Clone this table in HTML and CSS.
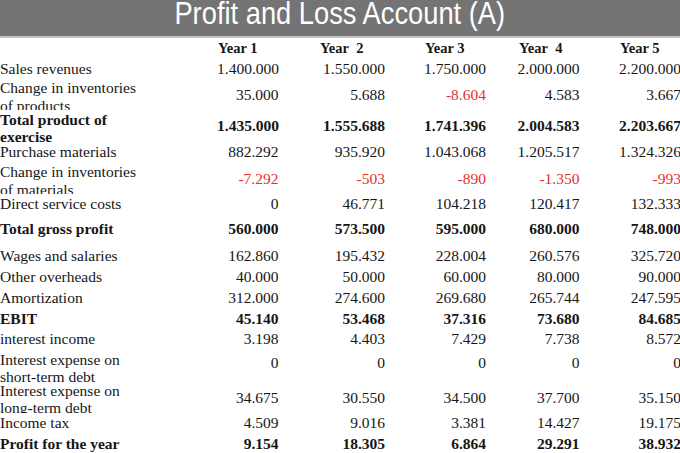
FILE: index.html
```html
<!DOCTYPE html>
<html lang="en">
<head>
<meta charset="utf-8">
<title>Profit and Loss Account (A)</title>
<link rel="stylesheet" href="styles.css">
</head>
<body>
<header class="titlebar"><h1 class="title">Profit and Loss Account (A)</h1></header>
<main class="table">
  <div class="row hdr h21">
    <div class="lbl"></div>
    <div class="c1">Year 1</div>
    <div class="c2">Year&nbsp; 2</div>
    <div class="c3">Year 3</div>
    <div class="c4">Year&nbsp; 4</div>
    <div class="c5">Year 5</div>
  </div>
  <div class="row h19">
    <div class="lbl">Sales revenues</div>
    <div class="c1">1.400.000</div><div class="c2">1.550.000</div><div class="c3">1.750.000</div><div class="c4">2.000.000</div><div class="c5">2.200.000</div>
  </div>
  <div class="row h32 pt2 lp3">
    <div class="lbl">Change in inventories of products</div>
    <div class="c1">35.000</div><div class="c2">5.688</div><div class="c3 neg">-8.604</div><div class="c4">4.583</div><div class="c5">3.667</div>
  </div>
  <div class="row h36 pb4 lp4 bold">
    <div class="lbl">Total product of exercise</div>
    <div class="c1">1.435.000</div><div class="c2">1.555.688</div><div class="c3">1.741.396</div><div class="c4">2.004.583</div><div class="c5">2.203.667</div>
  </div>
  <div class="row h14 pb2">
    <div class="lbl">Purchase materials</div>
    <div class="c1">882.292</div><div class="c2">935.920</div><div class="c3">1.043.068</div><div class="c4">1.205.517</div><div class="c5">1.324.326</div>
  </div>
  <div class="row h34 pt4 lp3">
    <div class="lbl">Change in inventories of materials</div>
    <div class="c1 neg">-7.292</div><div class="c2 neg">-503</div><div class="c3 neg">-890</div><div class="c4 neg">-1.350</div><div class="c5 neg">-993</div>
  </div>
  <div class="row h20">
    <div class="lbl">Direct service costs</div>
    <div class="c1">0</div><div class="c2">46.771</div><div class="c3">104.218</div><div class="c4">120.417</div><div class="c5">132.333</div>
  </div>
  <div class="row h30 bold">
    <div class="lbl">Total gross profit</div>
    <div class="c1">560.000</div><div class="c2">573.500</div><div class="c3">595.000</div><div class="c4">680.000</div><div class="c5">748.000</div>
  </div>
  <div class="row h24">
    <div class="lbl">Wages and salaries</div>
    <div class="c1">162.860</div><div class="c2">195.432</div><div class="c3">228.004</div><div class="c4">260.576</div><div class="c5">325.720</div>
  </div>
  <div class="row h18">
    <div class="lbl">Other overheads</div>
    <div class="c1">40.000</div><div class="c2">50.000</div><div class="c3">60.000</div><div class="c4">80.000</div><div class="c5">90.000</div>
  </div>
  <div class="row h24">
    <div class="lbl">Amortization</div>
    <div class="c1">312.000</div><div class="c2">274.600</div><div class="c3">269.680</div><div class="c4">265.744</div><div class="c5">247.595</div>
  </div>
  <div class="row h17 bold">
    <div class="lbl">EBIT</div>
    <div class="c1">45.140</div><div class="c2">53.468</div><div class="c3">37.316</div><div class="c4">73.680</div><div class="c5">84.685</div>
  </div>
  <div class="row h24">
    <div class="lbl">interest income</div>
    <div class="c1">3.198</div><div class="c2">4.403</div><div class="c3">7.429</div><div class="c4">7.738</div><div class="c5">8.572</div>
  </div>
  <div class="row h31 pb7 lp10">
    <div class="lbl">Interest expense on short-term debt</div>
    <div class="c1">0</div><div class="c2">0</div><div class="c3">0</div><div class="c4">0</div><div class="c5">0</div>
  </div>
  <div class="row h31 lp3">
    <div class="lbl">Interest expense on long-term debt</div>
    <div class="c1">34.675</div><div class="c2">30.550</div><div class="c3">34.500</div><div class="c4">37.700</div><div class="c5">35.150</div>
  </div>
  <div class="row h20">
    <div class="lbl">Income tax</div>
    <div class="c1">4.509</div><div class="c2">9.016</div><div class="c3">3.381</div><div class="c4">14.427</div><div class="c5">19.175</div>
  </div>
  <div class="row h20 pt2 bold">
    <div class="lbl">Profit for the year</div>
    <div class="c1">9.154</div><div class="c2">18.305</div><div class="c3">6.864</div><div class="c4">29.291</div><div class="c5">38.932</div>
  </div>
</main>
</body>
</html>
```

FILE: styles.css
```css
html, body {
  margin: 0;
  padding: 0;
  overflow: hidden;
  background: #ffffff;
}
body {
  width: 680px;
  height: 453px;
  font-family: "Liberation Serif", "Times New Roman", serif;
  color: #161616;
}
.titlebar {
  height: 36px;
  background: #747474;
  border-bottom: 2px solid #c3c3c3;
  display: flex;
  justify-content: center;
  align-items: flex-start;
}
.title {
  margin: 0;
  font-family: "Liberation Sans", Arial, sans-serif;
  font-weight: normal;
  font-size: 30.5px;
  line-height: 26px;
  color: #ffffff;
  white-space: nowrap;
  transform: scaleX(0.895);
}
.table {
  display: flex;
  flex-direction: column;
  width: 681px;
}
.row {
  display: flex;
  align-items: center;
  overflow: hidden;
  box-sizing: border-box;
  font-size: 15.5px;
  line-height: 17.5px;
  flex-shrink: 0;
}
.row > div {
  flex-shrink: 0;
  box-sizing: border-box;
  text-align: right;
  white-space: nowrap;
}
.row > .lbl {
  width: 217px;
  padding-right: 65px;
  text-align: left;
  white-space: normal;
}
.c1 { width: 61.5px; }
.c2 { width: 106.5px; }
.c3 { width: 101px; }
.c4 { width: 93.5px; }
.c5 { width: 101.5px; }

.hdr {
  font-weight: bold;
  font-size: 14.5px;
}
.hdr > div { text-align: left !important; }
.hdr .c1 { padding-left: 1px; }
.hdr .c2 { padding-left: 41.5px; }
.hdr .c3 { padding-left: 40px; }
.hdr .c4 { padding-left: 33px; }
.hdr .c5 { padding-left: 40.5px; }

.bold { font-weight: bold; }
.neg { color: #e4302e; }

.h14 { height: 14px; }
.h17 { height: 17px; }
.h18 { height: 18px; }
.h19 { height: 19px; }
.h20 { height: 20px; }
.h21 { height: 21px; }
.h24 { height: 24px; }
.h30 { height: 30px; }
.h31 { height: 31px; }
.h32 { height: 32px; }
.h34 { height: 34px; }
.h36 { height: 36px; }
.pt2 { padding-top: 2px; }
.pt4 { padding-top: 4px; }
.pb2 { padding-bottom: 2px; }
.pb4 { padding-bottom: 4px; }
.pb7 { padding-bottom: 7px; }
.lp3 > .lbl { padding-top: 3px; }
.lp4 > .lbl { padding-top: 4px; }
.lp10 > .lbl { padding-top: 10px; }
```
